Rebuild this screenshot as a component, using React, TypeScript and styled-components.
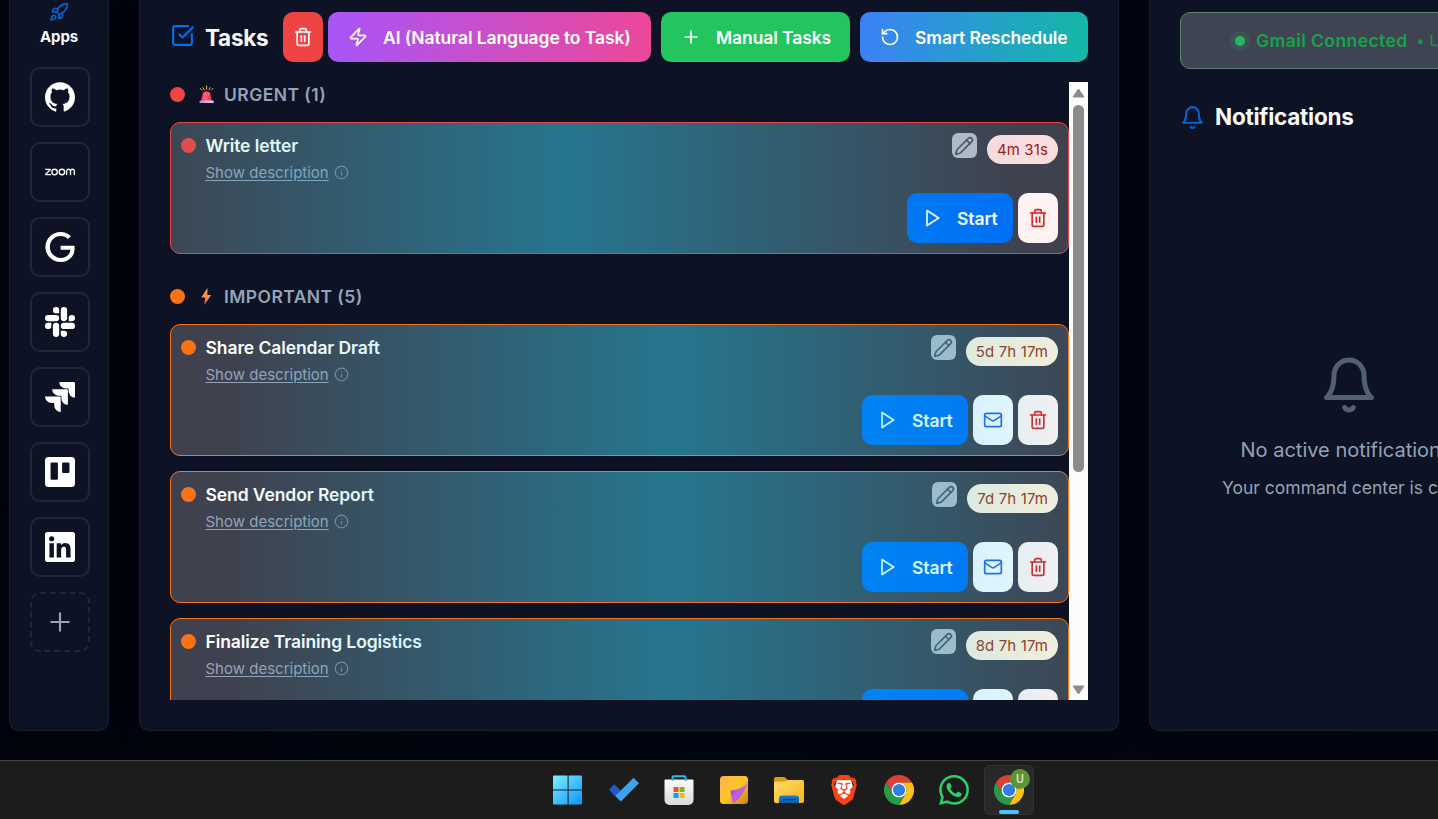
import React from 'react';
import styled, { createGlobalStyle } from 'styled-components';
import { Info, Pencil, Plus, Rocket, RotateCcw, SquareCheckBig, Trash2, Zap } from 'lucide-react';
import { SiBrave, SiGithub, SiGoogle, SiJira, SiSlack, SiTrello, SiWhatsapp, SiZoom } from 'react-icons/si';

const GlobalStyle = createGlobalStyle`
  * { box-sizing: border-box; }
  html, body { margin: 0; height: 100%; overflow: hidden; }
  body {
    background: #020510;
    color: #f8fafc;
    font-family: Inter, "Liberation Sans", sans-serif;
    font-size: 15px;
  }
  button { font-family: inherit; border: 0; padding: 0; cursor: pointer; }
  svg { display: block; flex-shrink: 0; }
`;

const Screen = styled.div`
  display: flex;
  flex-direction: column;
  width: 100vw;
  height: 819px;
  overflow: hidden;
`;

const Workspace = styled.main`
  display: flex;
  gap: 30px;
  height: 760px;
  padding: 0 0 29px 9px;
  background: linear-gradient(90deg, #01040c 0, #020611 50%, #020510 100%);
`;

const Panel = styled.section<{ $width: number }>`
  flex: 0 0 ${p => p.$width}px;
  border: 1px solid #182030;
  border-top: 0;
  border-radius: 0 0 10px 10px;
  background: #0d1224;
  box-shadow: 0 4px 24px rgba(0, 0, 0, 0.2);
`;

const AppsPanel = styled(Panel)`
  display: flex;
  flex-direction: column;
  align-items: center;
  padding-top: 2px;
`;

const AppsTitle = styled.h2`
  margin: 4px 0 20px;
  font-size: 15px;
  line-height: 21px;
  font-weight: 700;
  letter-spacing: -0.1px;
`;

const AppList = styled.div`
  display: flex;
  flex-direction: column;
  gap: 15px;
  padding-left: 2px;
`;

const AppTile = styled.button<{ $dashed?: boolean }>`
  display: flex;
  align-items: center;
  justify-content: center;
  width: 60px;
  height: 60px;
  border: 2px ${p => (p.$dashed ? 'dashed' : 'solid')} #1e2938;
  border-radius: 10px;
  background: transparent;
  color: ${p => (p.$dashed ? '#94a3b8' : '#fff')};
`;

const TasksPanel = styled(Panel)`
  display: flex;
  flex-direction: column;
  gap: 20px;
  padding: 12px 30px 30px;
`;

const TasksHeader = styled.header`
  display: flex;
  align-items: center;
  height: 50px;
`;

const Heading = styled.h1`
  display: flex;
  align-items: center;
  gap: 10px;
  margin: 0;
  font-size: 22.5px;
  line-height: 30px;
  font-weight: 700;
  letter-spacing: -0.25px;
  white-space: nowrap;
`;

const TasksHeading = styled(Heading)`
  width: 113px;
  padding-top: 2px;
  svg { margin-bottom: 5px; }
`;

const HeaderActions = styled.div`
  display: flex;
  gap: 10px;
`;

const ActionButton = styled.button<{ $bg: string; $width: number }>`
  display: flex;
  align-items: center;
  gap: 15px;
  width: ${p => p.$width}px;
  height: 50px;
  padding-left: 20px;
  border-radius: 10px;
  background: ${p => p.$bg};
  color: #fff;
  font-size: 17.5px;
  font-weight: 600;
  letter-spacing: -0.09px;
  white-space: nowrap;
`;

const IconButton = styled.button<{ $bg: string; $color: string }>`
  display: flex;
  align-items: center;
  justify-content: center;
  width: 40px;
  height: 50px;
  border-radius: 10px;
  background: ${p => p.$bg};
  color: ${p => p.$color};
`;

const ClearButton = styled(IconButton)`
  margin-right: 5px;
`;

const TaskScroller = styled.div`
  display: flex;
  height: 618px;
  overflow: hidden;
`;

const TaskColumn = styled.div`
  display: flex;
  flex-direction: column;
  gap: 30px;
  width: 899px;
`;

const TaskGroup = styled.div`
  display: flex;
  flex-direction: column;
  gap: 15px;
  flex-shrink: 0;
`;

const GroupTitle = styled.h3`
  display: flex;
  align-items: center;
  height: 25px;
  margin: 0;
  color: #94a3b8;
  font-size: 17.5px;
  font-weight: 600;
  letter-spacing: 0.42px;
  svg { margin: 0 8px 0 12px; }
`;

const Dot = styled.span<{ $color: string }>`
  flex-shrink: 0;
  width: 15px;
  height: 15px;
  border-radius: 50%;
  background: ${p => p.$color};
`;

const Card = styled.article<{ $color: string; $shift: number }>`
  position: relative;
  display: flex;
  flex-direction: column;
  justify-content: space-between;
  height: 132px;
  padding: 10px;
  border: 1px solid ${p => p.$color};
  border-radius: 10px;
  background: #3f414e;
  overflow: hidden;

  &::after {
    content: '';
    position: absolute;
    inset: 0;
    transform: translateX(${p => p.$shift}px);
    background: linear-gradient(90deg, transparent, rgba(0, 197, 240, 0.4), transparent);
    pointer-events: none;
  }
`;

const CardTop = styled.div`
  display: flex;
  align-items: flex-start;
`;

const CardInfo = styled.div`
  flex: 1;
  display: grid;
  grid-template-columns: 15px auto;
  column-gap: 9.5px;
  justify-content: start;
  align-items: center;
`;

const CardDot = styled(Dot)`
  margin-bottom: 2px;
`;

const TaskTitle = styled.h4`
  margin: 0;
  color: #fff;
  font-size: 17.5px;
  line-height: 26px;
  font-weight: 600;
  letter-spacing: -0.09px;
`;

const Description = styled.div`
  grid-column: 2;
  display: flex;
  align-items: center;
  gap: 5px;
  height: 27px;
  color: #94a3b8;
  svg { opacity: 0.7; }
`;

const DescriptionLink = styled.a`
  font-size: 15px;
  text-decoration: underline;
  text-underline-offset: 2px;
`;

const EditButton = styled.button`
  display: flex;
  align-items: center;
  justify-content: center;
  width: 25px;
  height: 25px;
  margin-right: 10px;
  border-radius: 6px;
  background: #b9bac2;
  color: #4b5563;
`;

const TimeLeft = styled.span<{ $bg: string; $color: string }>`
  height: 29px;
  margin-top: 2px;
  padding: 0 10px;
  border-radius: 15px;
  background: ${p => p.$bg};
  color: ${p => p.$color};
  font-size: 15px;
  letter-spacing: 0.12px;
  line-height: 30px;
`;

const CardActions = styled.div`
  display: flex;
  justify-content: flex-end;
  gap: 5px;
`;

const StartButton = styled(ActionButton)`
  padding-left: 15px;
`;

const Scrollbar = styled.div`
  display: flex;
  flex-direction: column;
  align-items: center;
  width: 19px;
  padding: 6px 0 5px;
  background: #fcfcfc;
`;

const Thumb = styled.div`
  width: 11px;
  height: 367px;
  margin: 7px 0 auto;
  border-radius: 6px;
  background: #8b8b8b;
`;

const NotificationsPanel = styled(Panel)`
  display: flex;
  flex-direction: column;
  padding: 12px 30px 30px;
`;

const GmailStatus = styled.div`
  display: flex;
  align-items: center;
  height: 57px;
  margin-bottom: 33px;
  padding-left: 54px;
  border: 1px solid #5f7f7a;
  border-radius: 10px;
  background: #3f4452;
  color: #16a34a;
  font-size: 17.5px;
  font-weight: 600;
  letter-spacing: 0.42px;
  white-space: nowrap;
`;

const StatusDot = styled.span`
  width: 10px;
  height: 10px;
  margin-right: 11px;
  border-radius: 50%;
  background: #2bb45e;
  box-shadow: 0 0 0 5px rgba(34, 197, 94, 0.12);
`;

const LiveLabel = styled.span`
  margin-left: 9px;
  font-size: 15px;
  font-weight: 500;
  opacity: 0.8;
`;

const EmptyState = styled.div`
  display: flex;
  flex-direction: column;
  align-items: center;
  margin-top: 223px;
  color: #94a3b8;
  white-space: nowrap;
  svg { color: #526072; }
`;

const EmptyTitle = styled.p`
  margin: 15px 6px 0 0;
  font-size: 20px;
  line-height: 40px;
`;

const EmptyText = styled.p`
  margin: 3px 7px 0 0;
  font-size: 17.5px;
  line-height: 30px;
`;

const Taskbar = styled.footer`
  display: flex;
  gap: 5px;
  height: 59px;
  padding: 4px 0 0 544px;
  border-top: 1px solid #444;
  background: #1c1c1c;
`;

const TaskbarItem = styled.div<{ $active?: boolean }>`
  position: relative;
  display: flex;
  align-items: center;
  justify-content: center;
  width: 50px;
  height: 50px;
  border-radius: 6px;
  border: 1px solid ${p => (p.$active ? '#323232' : 'transparent')};
  background: ${p => (p.$active ? '#282828' : 'transparent')};
`;

const ActiveMark = styled.span`
  position: absolute;
  left: 14px;
  bottom: 0;
  width: 20px;
  height: 4px;
  border-radius: 2px;
  background: #4cc2ff;
`;

const ProfileBadge = styled.span`
  position: absolute;
  top: 3px;
  right: 3px;
  width: 20px;
  height: 20px;
  border-radius: 50%;
  background: #5d9433;
  color: #d5e5c8;
  font: 500 12px/20px Roboto, sans-serif;
  text-align: center;
`;

const stroke = {
  fill: 'none',
  stroke: 'currentColor',
  strokeWidth: 2,
  strokeLinecap: 'round' as const,
  strokeLinejoin: 'round' as const,
};

const PlayIcon = () => (
  <svg width="20" height="20" viewBox="0 0 24 24" {...stroke}><path d="M6 3l14 9-14 9z" /></svg>
);

const BellIcon = ({ size, color }: { size: number; color?: string }) => (
  <svg width={size} height={size} viewBox="0 0 24 24" {...stroke} color={color}>
    <path d="M6 8a6 6 0 0 1 12 0c0 7 3 9 3 9H3s3-2 3-9" />
    <path d="M10.3 21a1.94 1.94 0 0 0 3.4 0" />
  </svg>
);

const MailIcon = () => (
  <svg width="20" height="20" viewBox="0 0 24 24" {...stroke}>
    <rect x="2" y="4" width="20" height="16" rx="2" />
    <path d="m22 7-8.97 5.7a1.94 1.94 0 0 1-2.06 0L2 7" />
  </svg>
);

const LinkedInIcon = () => (
  <svg width="30" height="30" viewBox="0 0 24 24" fill="currentColor">
    <path d="M20.447 20.452h-3.554v-5.569c0-1.328-.027-3.037-1.852-3.037-1.853 0-2.136 1.445-2.136 2.939v5.667H9.351V9h3.414v1.561h.046c.477-.9 1.637-1.85 3.37-1.85 3.601 0 4.267 2.37 4.267 5.455v6.286zM5.337 7.433a2.062 2.062 0 0 1-2.063-2.065 2.064 2.064 0 1 1 2.063 2.065zm1.782 13.019H3.555V9h3.564v11.452zM22.225 0H1.771C.792 0 0 .774 0 1.729v20.542C0 23.227.792 24 1.771 24h20.451C23.2 24 24 23.227 24 22.271V1.729C24 .774 23.2 0 22.222 0h.003z" />
  </svg>
);

const SirenIcon = () => (
  <svg width="19" height="19" viewBox="0 0 19 19">
    <defs>
      <linearGradient id="siren" x1="0" x2="1">
        <stop offset="0" stopColor="#ff3f68" /><stop offset="0.45" stopColor="#ff5f72" /><stop offset="1" stopColor="#e0223f" />
      </linearGradient>
      <linearGradient id="base" x1="0" x2="1">
        <stop offset="0" stopColor="#b58bd0" /><stop offset="1" stopColor="#ded7ea" />
      </linearGradient>
    </defs>
    <path d="M9.600 1v3.400M6 2.600l1.200 2.200M13.200 2.600 12 4.800M3.200 3.400l1.700 1.700M16 3.400l-1.700 1.700" stroke="#f0b040" strokeWidth="1" strokeLinecap="round" />
    <path d="M4.200 16 5.800 8.600Q6.400 6.400 8.500 6.400h2.200q2.100 0 2.700 2.200L15 16z" fill="url(#siren)" />
    <path d="M11.600 8.600l.300 1" stroke="#ff9aa8" strokeWidth="1" strokeLinecap="round" />
    <rect x="2.600" y="15.600" width="14" height="2.400" rx=".600" fill="url(#base)" />
  </svg>
);

const BoltIcon = () => (
  <svg width="19" height="19" viewBox="0 0 19 19">
    <defs>
      <linearGradient id="bolt" x1="0" y1="0" x2="0" y2="1">
        <stop offset="0" stopColor="#ffb84a" /><stop offset="0.5" stopColor="#ff8a4d" /><stop offset="1" stopColor="#f2405f" />
      </linearGradient>
    </defs>
    <path d="M10.500 1 4.200 10.400h3.900L7.400 18 14.200 8h-3.900z" fill="url(#bolt)" />
  </svg>
);

const WindowsLogo = () => (
  <svg width="34" height="30" viewBox="0 0 34 30">
    <defs>
      <linearGradient id="win" gradientUnits="userSpaceOnUse" x1="1" y1="0" x2="30" y2="30">
        <stop offset="0" stopColor="#7df1ff" /><stop offset="1" stopColor="#0a93ff" />
      </linearGradient>
    </defs>
    <path d="M2 .6h13.6v13.8H1V1.6a1 1 0 0 1 1-1zM16.6.6H29a1 1 0 0 1 1 1v12.8H16.6zM1 15.6h14.6v14H2a1 1 0 0 1-1-1zM16.6 15.6H30v13a1 1 0 0 1-1 1H16.6z" fill="url(#win)" />
  </svg>
);

const TodoLogo = () => (
  <svg width="30" height="30" viewBox="0 0 30 30">
    <path d="M0 14.700 5.200 9.200l6.600 6.600-5.600 5.600z" fill="#1d5dc8" />
    <path d="M6.200 20.900 24.600 2.800l5.400 5.500-18.200 18.300z" fill="#3ea1ee" />
  </svg>
);

const StoreLogo = () => (
  <svg width="30" height="30" viewBox="0 0 30 30">
    <defs>
      <linearGradient id="bag" x1="0" y1="0" x2="0" y2="1">
        <stop offset="0" stopColor="#fcfcfc" /><stop offset="1" stopColor="#d9d9d9" />
      </linearGradient>
    </defs>
    <path d="M.500 5.500a1 1 0 0 1 1-1h27a1 1 0 0 1 1 1V25a5 5 0 0 1-5 5h-19a5 5 0 0 1-5-5z" fill="url(#bag)" />
    <path d="M8.500 6V2.200A1 1 0 0 1 9.500 1.200h11A1 1 0 0 1 21.500 2.200V6" fill="none" stroke="#29b9ee" strokeWidth="2" />
    <path d="M9.500 12h5v5h-5z" fill="#f25022" /><path d="M15.500 12h5v5h-5z" fill="#7fba00" />
    <path d="M9.500 18h5v5h-5z" fill="#00a4ef" /><path d="M15.500 18h5v5h-5z" fill="#ffb900" />
  </svg>
);

const NotesLogo = () => (
  <svg width="30" height="30" viewBox="0 0 30 30">
    <defs>
      <linearGradient id="note" x1="0" y1="0" x2="1" y2="1">
        <stop offset="0" stopColor="#ffb04f" /><stop offset="0.5" stopColor="#ffc526" /><stop offset="1" stopColor="#c98211" />
      </linearGradient>
      <linearGradient id="fold" x1="0" y1="0" x2="1" y2="1">
        <stop offset="0" stopColor="#8d3bd0" /><stop offset="0.5" stopColor="#c163e6" /><stop offset="1" stopColor="#8a35c0" />
      </linearGradient>
    </defs>
    <rect x="1" y="1" width="28" height="28" rx="3.500" fill="url(#note)" />
    <path d="M14 28.500 11.500 17.500Q11.300 15 14 15q8.500-.500 14.500-7Q24.500 21 14 28.500z" fill="url(#fold)" />
  </svg>
);

const FolderLogo = () => (
  <svg width="30" height="30" viewBox="0 0 30 30">
    <defs>
      <linearGradient id="folder" x1="0" y1="0" x2="1" y2="1">
        <stop offset="0" stopColor="#ffdb6d" /><stop offset="1" stopColor="#f7b519" />
      </linearGradient>
      <linearGradient id="tray" x1="0" y1="0" x2="0" y2="1">
        <stop offset="0" stopColor="#1482d8" /><stop offset="1" stopColor="#0b5ba6" />
      </linearGradient>
    </defs>
    <path d="M0 10V4a2 2 0 0 1 2-2h7.500q1.200 0 2 .8L14 5.300h14a2 2 0 0 1 2 2V12z" fill="#dd9a0c" />
    <path d="M0 8.500a2 2 0 0 1 2-2h9l3-1.500h14a2 2 0 0 1 2 2V26a2 2 0 0 1-2 2H2a2 2 0 0 1-2-2z" fill="url(#folder)" />
    <path d="M5 28v-4.500a3 3 0 0 1 3-3h14a3 3 0 0 1 3 3V28z" fill="url(#tray)" />
    <path d="M9 24.500h12" stroke="#0a4680" strokeWidth="1.300" strokeLinecap="round" />
  </svg>
);

const BraveWrap = styled.span`
  display: grid;
  > svg { grid-area: 1 / 1; }
`;

const BraveLogo = () => (
  <BraveWrap>
    <svg width="30" height="30" viewBox="0 0 30 30"><path d="M8 5h14l2 7-3 12-6 4-6-4-3-12z" fill="#fff" /></svg>
    <SiBrave size={30} color="#fb4213" />
  </BraveWrap>
);

const ChromeLogo = () => (
  <svg width="30" height="30" viewBox="0 0 48 48">
    <path d="M3.215 12A24 24 0 0 1 44.785 12H24A12 12 0 0 0 13.608 30z" fill="#e04033" />
    <path d="M44.785 12A24 24 0 0 1 24 48L34.392 30A12 12 0 0 0 24 12z" fill="#fbc116" />
    <path d="M24 48A24 24 0 0 1 3.215 12L13.608 30A12 12 0 0 0 34.392 30z" fill="#2a9a49" />
    <circle cx="24" cy="24" r="12" fill="#fff" />
    <circle cx="24" cy="24" r="9.800" fill="#2f7de9" />
  </svg>
);

interface Task { title: string; left: string; mail?: boolean }
interface Level { label: string; color: string; shift: number; pillBg: string; pillColor: string; icon: React.ReactNode; tasks: Task[] }

const levels: Level[] = [
  {
    label: 'URGENT (1)', color: '#ef4444', shift: -49, pillBg: '#fadddd', pillColor: '#991b1b', icon: <SirenIcon />,
    tasks: [{ title: 'Write letter', left: '4m 31s' }],
  },
  {
    label: 'IMPORTANT (5)', color: '#f97316', shift: 52, pillBg: '#fff0dc', pillColor: '#9a3412', icon: <BoltIcon />,
    tasks: [
      { title: 'Share Calendar Draft', left: '5d 7h 17m', mail: true },
      { title: 'Send Vendor Report', left: '7d 7h 17m', mail: true },
      { title: 'Finalize Training Logistics', left: '8d 7h 17m', mail: true },
    ],
  },
];

const TaskCard = ({ task, level }: { task: Task; level: Level }) => (
  <Card $color={level.color} $shift={level.shift}>
    <CardTop>
      <CardInfo>
        <CardDot $color={level.color} />
        <TaskTitle>{task.title}</TaskTitle>
        <Description>
          <DescriptionLink>Show description</DescriptionLink>
          <Info size={15} />
        </Description>
      </CardInfo>
      <EditButton aria-label="Edit"><Pencil size={20} /></EditButton>
      <TimeLeft $bg={level.pillBg} $color={level.pillColor}>{task.left}</TimeLeft>
    </CardTop>
    <CardActions>
      <StartButton $bg="#0070f3" $width={106}><PlayIcon />Start</StartButton>
      {task.mail && <IconButton $bg="#f8fafe" $color="#2563eb" aria-label="Mail"><MailIcon /></IconButton>}
      <IconButton $bg="#fef2f2" $color="#dc2626" aria-label="Delete"><Trash2 size={20} /></IconButton>
    </CardActions>
  </Card>
);

const apps = [
  <SiGithub size={30} />, <SiZoom size={30} />, <SiGoogle size={30} />, <SiSlack size={30} />,
  <SiJira size={30} />, <SiTrello size={30} />, <LinkedInIcon />,
];

const pinned = [
  <WindowsLogo />, <TodoLogo />, <StoreLogo />, <NotesLogo />, <FolderLogo />,
  <BraveLogo />, <ChromeLogo />, <SiWhatsapp size={30} color="#25d366" />,
];

export default function App() {
  return (
    <Screen>
      <GlobalStyle />
      <Workspace>
        <AppsPanel $width={100}>
          <Rocket size={20} color="#0a62d0" />
          <AppsTitle>Apps</AppsTitle>
          <AppList>
            {apps.map((icon, i) => <AppTile key={i}>{icon}</AppTile>)}
            <AppTile $dashed><Plus size={30} strokeWidth={1.7} /></AppTile>
          </AppList>
        </AppsPanel>

        <TasksPanel $width={980}>
          <TasksHeader>
            <TasksHeading><SquareCheckBig size={25} color="#0070f3" />Tasks</TasksHeading>
            <ClearButton $bg="#ef4444" $color="#fff" aria-label="Clear"><Trash2 size={20} /></ClearButton>
            <HeaderActions>
              <ActionButton $width={323} $bg="linear-gradient(90deg, #a855f7, #ec4899)"><Zap size={20} />AI (Natural Language to Task)</ActionButton>
              <ActionButton $width={189} $bg="#22c55e"><Plus size={20} />Manual Tasks</ActionButton>
              <ActionButton $width={228} $bg="linear-gradient(90deg, #3b82f6, #14b8a6)"><RotateCcw size={20} />Smart Reschedule</ActionButton>
            </HeaderActions>
          </TasksHeader>
          <TaskScroller>
            <TaskColumn>
              {levels.map(level => (
                <TaskGroup key={level.label}>
                  <GroupTitle><Dot $color={level.color} />{level.icon}{level.label}</GroupTitle>
                  {level.tasks.map(task => <TaskCard key={task.title} task={task} level={level} />)}
                </TaskGroup>
              ))}
            </TaskColumn>
            <Scrollbar>
              <svg width="13" height="10" viewBox="0 0 13 10"><path d="M6.500 1 12 9H1z" fill="#8b8b8b" stroke="#8b8b8b" strokeLinejoin="round" /></svg>
              <Thumb />
              <svg width="13" height="10" viewBox="0 0 13 10"><path d="M6.500 9 12 1H1z" fill="#8b8b8b" stroke="#8b8b8b" strokeLinejoin="round" /></svg>
            </Scrollbar>
          </TaskScroller>
        </TasksPanel>

        <NotificationsPanel $width={400}>
          <GmailStatus><StatusDot />Gmail Connected<LiveLabel>• Live</LiveLabel></GmailStatus>
          <Heading><BellIcon size={25} color="#0a62d0" />Notifications</Heading>
          <EmptyState>
            <BellIcon size={60} />
            <EmptyTitle>No active notifications</EmptyTitle>
            <EmptyText>Your command center is clear</EmptyText>
          </EmptyState>
        </NotificationsPanel>
      </Workspace>

      <Taskbar>
        {pinned.map((icon, i) => <TaskbarItem key={i}>{icon}</TaskbarItem>)}
        <TaskbarItem $active><ChromeLogo /><ProfileBadge>U</ProfileBadge><ActiveMark /></TaskbarItem>
      </Taskbar>
    </Screen>
  );
}
